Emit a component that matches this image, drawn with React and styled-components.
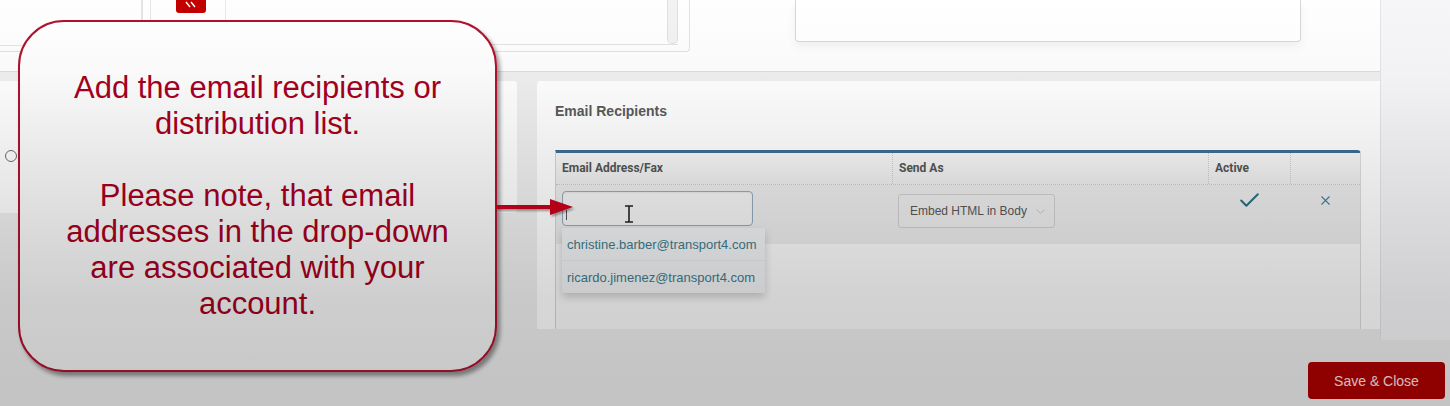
import React from "react";
import styled, { createGlobalStyle } from "styled-components";
import { Check, X, ChevronDown } from "lucide-react";

const GlobalStyle = createGlobalStyle`
  html, body {
    margin: 0;
    padding: 0;
    background: #efefef;
    font-family: "Liberation Sans", Arial, sans-serif;
  }
`;

const recipients = [
  "christine.barber@transport4.com",
  "ricardo.jimenez@transport4.com",
];

const App = () => {
  return (
    <>
      <GlobalStyle />
      <Page>
        <Body>
          <Main>
            {/* top strip: navigation card + info card */}
            <TopSection>
              <NavCard>
                <LeftPane />
                <InnerPanel>
                  <ToolCol>
                    <CollapseButton aria-label="collapse">
                      <svg viewBox="0 0 30 13" width="30" height="13">
                        <path d="M10 2l4 5M15 2l4 5" stroke="#fff" strokeWidth="1.4" fill="none" />
                      </svg>
                    </CollapseButton>
                  </ToolCol>
                  <PanelContent />
                  <Scrollbar />
                </InnerPanel>
              </NavCard>
              <InfoCard />
            </TopSection>

            <LowerSection>
              <OptionsCard>
                <Radio />
              </OptionsCard>

              <RecipientsCard>
                <CardTitle>Email Recipients</CardTitle>
                <Table>
                  <HeaderRow>
                    <HeaderCell>Email Address/Fax</HeaderCell>
                    <HeaderCell>Send As</HeaderCell>
                    <HeaderCell>Active</HeaderCell>
                    <HeaderCell />
                  </HeaderRow>
                  <BodyRow>
                    <Cell>
                      <InputBox>
                        <Caret />
                        <IBeam viewBox="0 0 10 18" width="10" height="18">
                          <path d="M1 1h8M1 17h8M5 1v16" stroke="#222" strokeWidth="1.6" fill="none" />
                        </IBeam>
                        <Suggestions>
                          {recipients.map((r) => (
                            <Suggestion key={r}>{r}</Suggestion>
                          ))}
                        </Suggestions>
                      </InputBox>
                    </Cell>
                    <Cell>
                      <SelectBox>
                        Embed HTML in Body
                        <ChevronDown size={15} color="#c4c4c4" strokeWidth={1.5} />
                      </SelectBox>
                    </Cell>
                    <IconCell>
                      <Check size={25} color="#276f80" strokeWidth={1.9} />
                    </IconCell>
                    <IconCell>
                      <X size={15} color="#3f80a2" strokeWidth={1.8} />
                    </IconCell>
                  </BodyRow>
                  <TableFill />
                </Table>
              </RecipientsCard>
            </LowerSection>
          </Main>
          <Side />
        </Body>

        <Footer>
          <SaveButton>Save &amp; Close</SaveButton>
        </Footer>

        <Callout>
          <p>Add the email recipients or distribution list.</p>
          <p>Please note, that email addresses in the drop-down are associated with your account.</p>
        </Callout>

        <Arrow viewBox="0 0 80 24" width="80" height="24">
          <defs>
            <filter id="ash" x="-10%" y="-30%" width="130%" height="180%">
              <feDropShadow dx="1.5" dy="2" stdDeviation="1.2" floodOpacity="0.35" />
            </filter>
          </defs>
          <g filter="url(#ash)">
            <rect x="0" y="9" width="58" height="4" fill="#c8001b" />
            <polygon points="54,3 77,11 54,19" fill="#c8001b" />
          </g>
        </Arrow>

        <Dim />
      </Page>
    </>
  );
};

export default App;

/* ---------------- Styled Components ---------------- */
const Page = styled.div`
  position: relative;
  width: 1450px;
  height: 406px;
  overflow: hidden;
  display: flex;
  flex-direction: column;
  background: #efefef;
`;

const Body = styled.div`
  display: flex;
  height: 340px;
`;

const Main = styled.div`
  width: 1380px;
  display: flex;
  flex-direction: column;
  background: #efefef;
`;

const Side = styled.div`
  flex: 1;
  background: #f6f6f8;
  border-left: 1px solid #e4e4e6;
`;

const TopSection = styled.div`
  height: 71px;
  background: #fefefe;
  border-bottom: 1px solid #dddddd;
  display: flex;
  align-items: flex-start;
`;

const NavCard = styled.div`
  width: 690px;
  height: 52px;
  box-sizing: border-box;
  border: 1px solid #e2e2e2;
  border-top: none;
  border-left: none;
  border-radius: 0 0 4px 0;
  display: flex;
  align-items: flex-start;
`;

const LeftPane = styled.div`
  width: 141px;
  height: 45px;
  border-right: 2px solid #e4e4e4;
  border-bottom: 1px solid #e4e4e4;
`;

const InnerPanel = styled.div`
  margin-left: 7px;
  width: 528px;
  height: 45px;
  box-sizing: border-box;
  border-left: 1px solid #e6e6e6;
  border-bottom: 1px solid #e2e2e2;
  display: flex;
`;

const ToolCol = styled.div`
  width: 75px;
  box-sizing: border-box;
  padding-left: 25px;
  border-right: 1px solid #e8e8e8;
`;

const CollapseButton = styled.div`
  width: 30px;
  height: 13px;
  background: #c30000;
  border-radius: 0 0 3px 3px;
  display: flex;

  svg {
    display: block;
  }
`;

const PanelContent = styled.div`
  flex: 1;
`;

const Scrollbar = styled.div`
  width: 9px;
  height: 43px;
  background: #f2f2f2;
  border: 1px solid #e0e0e0;
  border-top: none;
  border-radius: 0 0 5px 5px;
`;

const InfoCard = styled.div`
  margin-left: 105px;
  width: 506px;
  height: 42px;
  box-sizing: border-box;
  background: #fff;
  border: 1px solid #d8d8d8;
  border-top: none;
  border-radius: 0 0 4px 4px;
  box-shadow: 0 5px 10px rgba(0, 0, 0, 0.05);
`;

const LowerSection = styled.div`
  flex: 1;
  display: flex;
  align-items: flex-start;
  gap: 20px;
  padding-top: 9px;
`;

const OptionsCard = styled.div`
  width: 517px;
  height: 132px;
  background: #fff;
  border-radius: 0 3px 3px 0;
  box-sizing: border-box;
  padding: 69px 0 0 5px;
`;

const Radio = styled.div`
  width: 10px;
  height: 10px;
  border: 1.8px solid #6c6c6c;
  border-radius: 50%;
`;

const RecipientsCard = styled.div`
  width: 843px;
  height: 248px;
  box-sizing: border-box;
  background: #fff;
  border-radius: 3px 0 0 0;
  padding: 22px 19px 0 18px;
  display: flex;
  flex-direction: column;
  overflow: hidden;
`;

const CardTitle = styled.div`
  font-weight: 700;
  font-size: 14px;
  line-height: 17px;
  color: #5a5a5a;
`;

const Table = styled.div`
  margin-top: 30px;
  flex: 1;
  display: flex;
  flex-direction: column;
  border-top: 3px solid #3d6e94;
  border-left: 1px solid #d4d4d4;
  border-right: 1px solid #dcdcdc;
  border-radius: 0 4px 0 0;
`;

const HeaderRow = styled.div`
  display: grid;
  grid-template-columns: 336px 316px 82px 1fr;
  height: 31px;
  background: linear-gradient(#f8f8f8, #ededed);
  border-bottom: 1px dotted #c4c4c4;
`;

const HeaderCell = styled.div`
  padding: 0 6px;
  line-height: 31px;
  font-family: Roboto, "Liberation Sans", sans-serif;
  font-weight: 700;
  font-size: 12px;
  color: #555;
  & + & {
    border-left: 1px dotted #cccccc;
  }
`;

const BodyRow = styled.div`
  display: grid;
  grid-template-columns: 336px 316px 82px 1fr;
  height: 59px;
  background: #ececec;
`;

const Cell = styled.div`
  padding: 6px 6px 0;
`;

const IconCell = styled.div`
  display: flex;
  justify-content: center;
  padding-top: 3px;
  & + & {
    padding-top: 8px;
  }
`;

const InputBox = styled.div`
  position: relative;
  width: 191px;
  height: 35px;
  box-sizing: border-box;
  border: 1px solid #93a9bd;
  border-radius: 4px;
  background: #f4f4f4;
  box-shadow: inset 0 1px 2px rgba(0, 0, 0, 0.06);
`;

const Caret = styled.div`
  position: absolute;
  left: 3px;
  top: 18px;
  width: 1px;
  height: 10px;
  background: #555;
`;

const IBeam = styled.svg`
  position: absolute;
  left: 61px;
  top: 13px;
`;

const Suggestions = styled.div`
  position: absolute;
  top: 36px;
  left: -1px;
  width: 203px;
  background: #f0f1f3;
  box-shadow: 0 4px 8px rgba(0, 0, 0, 0.18);
  z-index: 2;
`;

const Suggestion = styled.div`
  height: 32px;
  line-height: 33px;
  padding-left: 5px;
  font-size: 13px;
  color: #3c7b8c;
  white-space: nowrap;
  & + & {
    border-top: 1px solid #e4e6e8;
  }
`;

const SelectBox = styled.div`
  margin-top: 3px;
  width: 157px;
  height: 34px;
  box-sizing: border-box;
  border: 1px solid #cfcfcf;
  border-radius: 3px;
  background: #ededed;
  padding: 0 6px 0 11px;
  display: flex;
  align-items: center;
  justify-content: space-between;
  font-size: 12px;
  color: #585858;
`;

const TableFill = styled.div`
  flex: 1;
  background: #fafafa;
`;

const Footer = styled.div`
  flex: 1;
  display: flex;
  justify-content: flex-end;
  align-items: flex-start;
  padding: 22px 5px 0 0;
  background: #eeeeee;
`;

const SaveButton = styled.button`
  width: 137px;
  height: 37px;
  border: none;
  border-radius: 4px;
  background: #ad0000;
  color: #ffe2e2;
  font-family: "Liberation Sans", Arial, sans-serif;
  font-size: 14px;
  cursor: pointer;
`;

const Callout = styled.div`
  position: absolute;
  left: 18px;
  top: 20px;
  width: 479px;
  height: 352px;
  box-sizing: border-box;
  border: 2px solid #b0122e;
  border-radius: 46px;
  background: linear-gradient(#ffffff, #f3f3f3);
  box-shadow: 3px 4px 4px rgba(0, 0, 0, 0.4);
  display: flex;
  flex-direction: column;
  justify-content: center;
  gap: 36px;
  padding: 0 28px;
  text-align: center;
  color: #a6001e;
  font-size: 31px;
  line-height: 36px;
  z-index: 3;

  p {
    margin: 0;
  }
`;

const Arrow = styled.svg`
  position: absolute;
  left: 496px;
  top: 196px;
  z-index: 4;
`;

const Dim = styled.div`
  position: absolute;
  inset: 0;
  pointer-events: none;
  z-index: 10;
  background: linear-gradient(
    rgba(0, 0, 0, 0) 0px,
    rgba(0, 0, 0, 0.02) 80px,
    rgba(0, 0, 0, 0.1) 200px,
    rgba(0, 0, 0, 0.16) 300px,
    rgba(0, 0, 0, 0.18) 406px
  );
`;
